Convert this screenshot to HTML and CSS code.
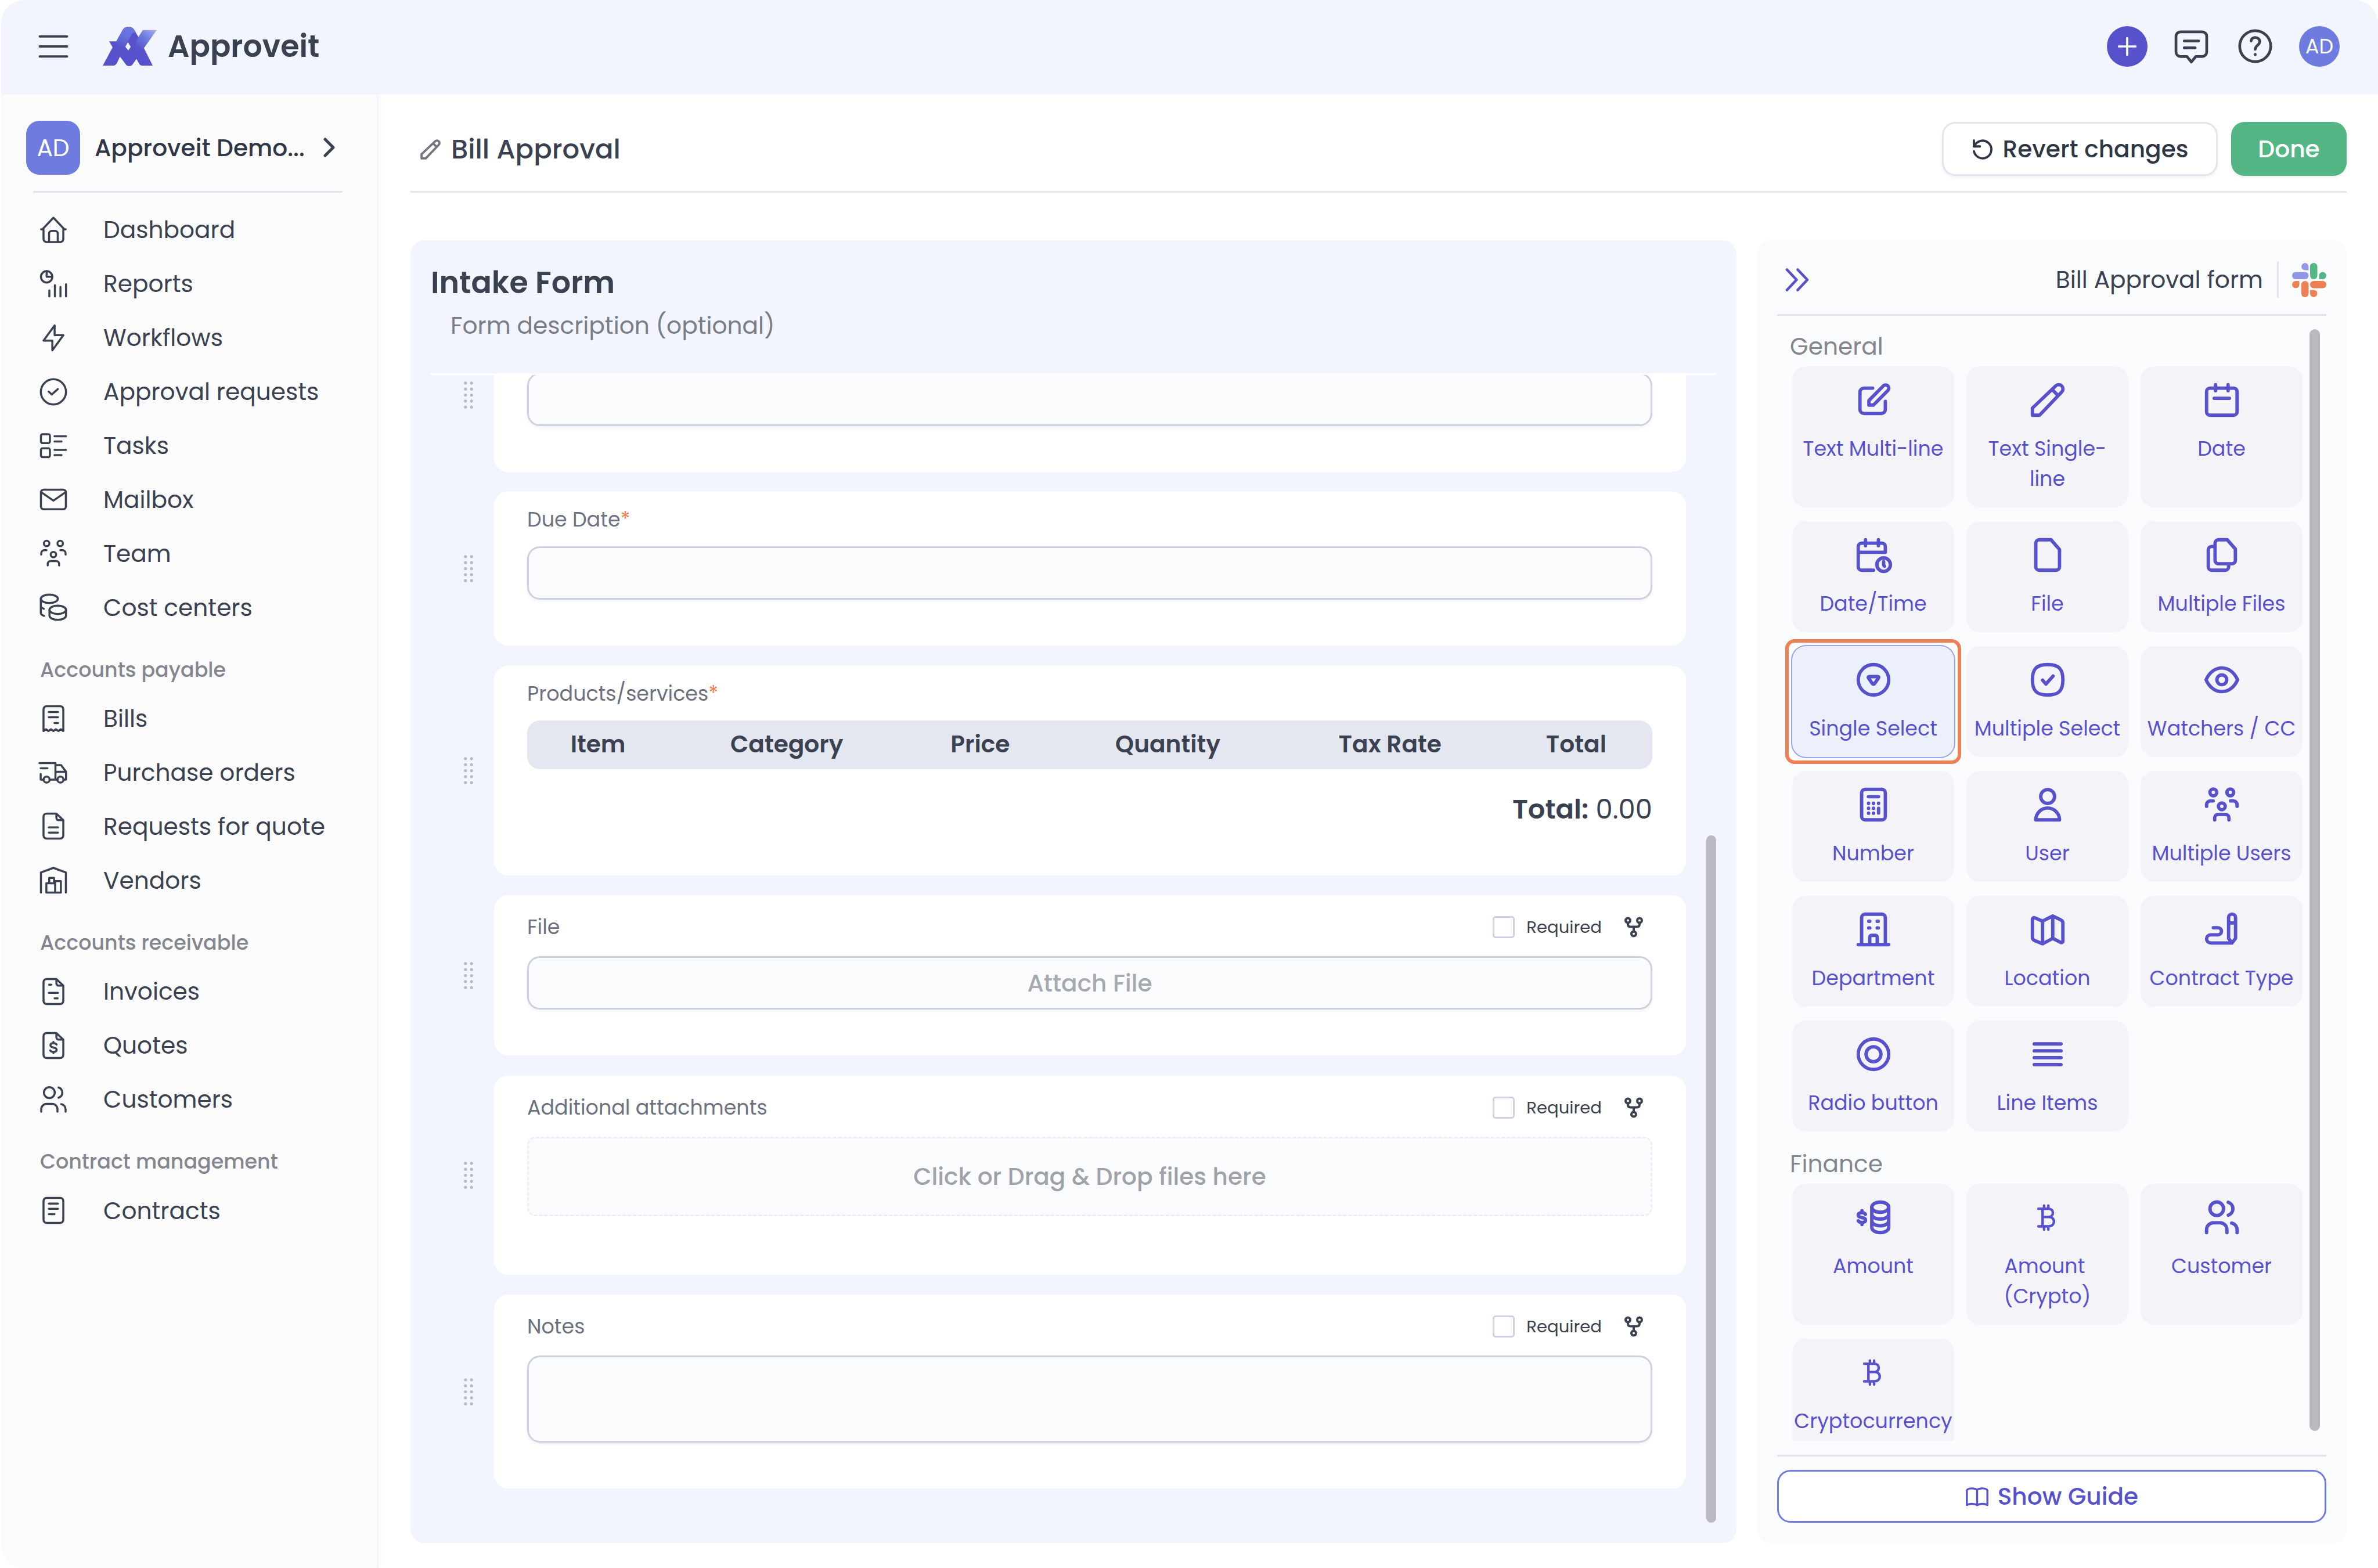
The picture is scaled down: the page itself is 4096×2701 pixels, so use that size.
FILE: index.html
```
<!DOCTYPE html>
<html lang="en">
<head>
    <meta charset="UTF-8">
    <meta name="viewport" content="width=device-width, initial-scale=1.0">
    <title>Approveit</title>
    <link rel="stylesheet" href="styles.css">
</head>
<body>

<!-- icon set -->
<svg class="sprite" xmlns="http://www.w3.org/2000/svg">
    <symbol id="i-home" viewBox="0 0 24 24"><path d="M2.9 11.6h1L12 3l8.1 8.6h1M4.7 11.6v7.2A2.3 2.3 0 0 0 7 21h10a2.3 2.3 0 0 0 2.3-2.2v-7.2M8.8 21v-6.3a2 2 0 0 1 2-2h2.4a2 2 0 0 1 2 2V21"/></symbol>
    <symbol id="i-reports" viewBox="0 0 24 24"><circle cx="7" cy="6.8" r="4.2"/><path d="M7 2.8v4h4M9 21.3v-4.5M13.1 21.3V13M17.2 21.3v-7M21.3 21.3v-9"/></symbol>
    <symbol id="i-bolt" viewBox="0 0 24 24"><path d="M12.9 2.8L4.7 14h6.5v7.2L19.4 10h-6.5z"/></symbol>
    <symbol id="i-check" viewBox="0 0 24 24"><circle cx="12" cy="12" r="9.3"/><path d="M8.5 11.8l2.3 2.1 4.5-4"/></symbol>
    <symbol id="i-tasks" viewBox="0 0 24 24"><rect x="2.8" y="3.4" width="6.6" height="6.6" rx="1.2"/><rect x="2.8" y="13.8" width="6.6" height="6.6" rx="1.2"/><path d="M12.8 4.9h8.5M12.8 8.8H18M12.8 15h8.5M12.8 18.9H18"/></symbol>
    <symbol id="i-mail" viewBox="0 0 24 24"><rect x="2.8" y="4.9" width="18.4" height="14.5" rx="2"/><path d="M3.2 6.9L12 13l8.8-6.1"/></symbol>
    <symbol id="i-team" viewBox="0 0 24 24"><circle cx="7" cy="4.8" r="2"/><circle cx="17" cy="4.8" r="2"/><circle cx="12" cy="13" r="2"/><path d="M3 13v-1a2.2 2.2 0 0 1 2.2-2.2h1.7M21 13v-1a2.2 2.2 0 0 0-2.2-2.2h-1.7M7.8 21v-1.2a2 2 0 0 1 2-2h4.4a2 2 0 0 1 2 2V21"/></symbol>
    <symbol id="i-coins" viewBox="0 0 24 24"><ellipse cx="9" cy="5.8" rx="6.3" ry="3.1"/><ellipse cx="15.2" cy="13.9" rx="6.1" ry="3.1"/><path d="M9.1 14v4.2c0 1.7 2.7 3.1 6.1 3.1s6.1-1.4 6.1-3.1V14M2.7 5.8v10.4c0 1 .9 1.7 2.4 2.2M2.7 11c0 .9.8 1.6 2.2 2.1"/></symbol>
    <symbol id="i-bill" viewBox="0 0 24 24"><path d="M4.7 21.1V5a2.2 2.2 0 0 1 2.2-2.2h10.2A2.2 2.2 0 0 1 19.3 5v16.1l-1.8-1.3-1.8 1.3-1.9-1.3-1.8 1.3-1.8-1.3-1.9 1.3-1.8-1.3zM8.6 7.1h6.8M8.6 10.9h6.8M12.8 15.2h2.6"/></symbol>
    <symbol id="i-truck" viewBox="0 0 24 24"><path d="M1.7 4.9h11.8v12.2M2.6 8.8h5M2.6 13v4.1h2.1M9.2 17.1h5.7M13.5 6.4h4.2l3.6 4.9v5.8h-1.9M13.5 11.4h7.6"/><circle cx="7" cy="17.1" r="2.2"/><circle cx="17.2" cy="17.1" r="2.2"/></symbol>
    <symbol id="i-doc" viewBox="0 0 24 24"><path d="M14.2 2.8H6.9A2.2 2.2 0 0 0 4.7 5v14a2.2 2.2 0 0 0 2.2 2.2h10.2a2.2 2.2 0 0 0 2.2-2.2V7.6zM14.2 3v3a1.6 1.6 0 0 0 1.6 1.6H19M8.6 13h6.8M8.6 16.8h6.8"/></symbol>
    <symbol id="i-warehouse" viewBox="0 0 24 24"><path d="M2.8 21.2V6.4L12 3l9.2 3.4v14.8M6.8 21.2v-6.8h6.5v6.8zM13.3 21.2v-8.4h4.2v8.4zM8.9 14.4v-4h3.6v4"/></symbol>
    <symbol id="i-invoice" viewBox="0 0 24 24"><path d="M14.2 2.8H6.9A2.2 2.2 0 0 0 4.7 5v14a2.2 2.2 0 0 0 2.2 2.2h10.2a2.2 2.2 0 0 0 2.2-2.2V7.6zM14.2 3v3a1.6 1.6 0 0 0 1.6 1.6H19M8.8 7h1.6M8.6 13h6.8M12.9 17h2.2"/></symbol>
    <symbol id="i-quote" viewBox="0 0 24 24"><path d="M14.2 2.8H6.9A2.2 2.2 0 0 0 4.7 5v14a2.2 2.2 0 0 0 2.2 2.2h10.2a2.2 2.2 0 0 0 2.2-2.2V7.6zM14.2 3v3a1.6 1.6 0 0 0 1.6 1.6H19M14.3 11.3c-.4-.7-1.2-1-2.3-1-1.3 0-2.2.6-2.2 1.6 0 2.2 4.6 1 4.6 3.2 0 1-1 1.6-2.4 1.6-1.1 0-2-.4-2.4-1.1M12 9.3v1M12 16.7v1"/></symbol>
    <symbol id="i-users" viewBox="0 0 24 24"><circle cx="9" cy="6.9" r="4"/><path d="M3 21v-1.8a4 4 0 0 1 4-4h4a4 4 0 0 1 4 4V21M15.8 3.1a4 4 0 0 1 0 7.6M17.8 15.4a4 4 0 0 1 3.2 3.9V21"/></symbol>
    <symbol id="i-contract" viewBox="0 0 24 24"><rect x="4.7" y="2.8" width="14.6" height="18.4" rx="2.2"/><path d="M8.6 7h6.8M8.6 10.8h6.8M8.6 14.8h4.2"/></symbol>
    <symbol id="i-chat" viewBox="0 0 24 24"><path d="M5.5 3.400h13a2.700 2.700 0 0 1 2.700 2.700v9.400a2.700 2.700 0 0 1-2.700 2.700h-3.800L12 21.500l-2.700-3.300H5.500a2.700 2.700 0 0 1-2.700-2.700V6.100a2.700 2.700 0 0 1 2.700-2.700zM7.700 8.900h8.600M7.700 13h6.600"/></symbol>
    <symbol id="i-help" viewBox="0 0 24 24"><circle cx="12" cy="12" r="9.3"/><path d="M9.500 8.900c.2-1.300 1.200-2.100 2.500-2.100 1.500 0 2.700 1 2.700 2.500 0 2.200-2.700 2.200-2.700 4.600M12 16.900v.2"/></symbol>
    <symbol id="i-pen" viewBox="0 0 24 24"><path d="M3 16.800L16.700 3.700a2.500 2.500 0 0 1 3.600 3.600L7.200 21H3zM14.700 5.900l3.400 3.400"/></symbol>
    <symbol id="i-revert" viewBox="0 0 24 24"><path d="M2.500 2.500V9H9M2.900 9A9.600 9.600 0 1 1 2.500 14.200"/></symbol>
    <symbol id="i-edit" viewBox="0 0 24 24"><path d="M11.500 5H6.400A2.400 2.400 0 0 0 4 7.400v10.200A2.400 2.400 0 0 0 6.400 20h10.200a2.400 2.400 0 0 0 2.400-2.400v-4.800M9.300 12.300l8.500-8.600a1.900 1.900 0 0 1 2.700 2.700L12 15H9.300z"/></symbol>
    <symbol id="i-date" viewBox="0 0 24 24"><rect x="3" y="5" width="18" height="16" rx="2"/><path d="M8.300 3v3.500M15.700 3v3.500M7.500 11h9"/></symbol>
    <symbol id="i-datetime" viewBox="0 0 24 24"><path d="M19 10.300V7a2 2 0 0 0-2-2H5a2 2 0 0 0-2 2v12a2 2 0 0 0 2 2h7M7.300 3v3.500M14.900 3v3.500M3 10.400h16M18 16v2l.5.6"/><circle cx="18" cy="17.700" r="4"/></symbol>
    <symbol id="i-file" viewBox="0 0 24 24"><path d="M5 19V5a2 2 0 0 1 2-2h7l5 5.800V19a2 2 0 0 1-2 2H7a2 2 0 0 1-2-2z"/></symbol>
    <symbol id="i-files" viewBox="0 0 24 24"><path d="M8 15.200V5a2 2 0 0 1 2-2h5.200L20 8.500v6.700a2 2 0 0 1-2 2h-8a2 2 0 0 1-2-2zM8 7H6a2 2 0 0 0-2 2v10a2 2 0 0 0 2 2h8a2 2 0 0 0 2-2v-1.800"/></symbol>
    <symbol id="i-single" viewBox="0 0 24 24"><circle cx="12" cy="12" r="9"/><path d="M9.500 10.100h5c.5 0 .8.400.5.800L12.600 14.300a.7.7 0 0 1-1.200 0L9 10.900c-.3-.4 0-.8.5-.8z"/></symbol>
    <symbol id="i-multi" viewBox="0 0 24 24"><path d="M12 3c6.500 0 9 2.500 9 9s-2.500 9-9 9-9-2.500-9-9 2.500-9 9-9z"/><path d="M9 12.200l2 2.300 4.200-4.700"/></symbol>
    <symbol id="i-eye" viewBox="0 0 24 24"><path d="M2.700 12C4.500 7.800 7.900 5 12 5s7.500 2.800 9.300 7c-1.800 4.200-5.200 7-9.300 7s-7.500-2.800-9.300-7z"/><circle cx="12" cy="12" r="2.900"/></symbol>
    <symbol id="i-calc" viewBox="0 0 24 24"><rect x="5" y="3" width="14" height="18" rx="2"/><path d="M9 7.300h6M9.100 11.200v.1M12 11.200v.1M15 11.200v.1M9.100 14.100v.1M12 14.100v.1M9.100 17v.1M12 17v.1M15 14.200V17"/></symbol>
    <symbol id="i-user" viewBox="0 0 24 24"><circle cx="12" cy="7.200" r="4.100"/><path d="M5 21a7 7 0 0 1 14 0z"/></symbol>
    <symbol id="i-building" viewBox="0 0 24 24"><path d="M5 21V5a2 2 0 0 1 2-2h10a2 2 0 0 1 2 2v16M3 21h18M9.800 21v-4.500a1 1 0 0 1 1-1h2.400a1 1 0 0 1 1 1V21M9.200 7.200h.6M14.200 7.200h.6M9.200 11.100h.6M14.200 11.100h.6"/></symbol>
    <symbol id="i-map" viewBox="0 0 24 24"><path d="M3 6.200c0-1 .7-1.400 1.500-1L9 7.100l6-3 4.800 2.300c.8.4 1.200 1 1.200 1.900v10.500c0 .9-.7 1.200-1.500.8L15 17.300l-6 3.200-4.800-2c-.8-.4-1.200-1-1.200-1.800zM9 7.100v13.400M15 4.100v13.200"/></symbol>
    <symbol id="i-sign" viewBox="0 0 24 24"><path d="M16 17.300V5a2 2 0 0 1 4.100 0v12.300L18 20zM16 8.200h4.100M18 20H5.400a2.400 2.400 0 0 1 0-4.800h4.300a2.100 2.100 0 0 0 0-4.200H7"/></symbol>
    <symbol id="i-radio" viewBox="0 0 24 24"><circle cx="12" cy="12" r="9"/><circle cx="12" cy="12" r="4.400"/></symbol>
    <symbol id="i-lines" viewBox="0 0 24 24"><path d="M4.100 5.900h15.800M4.100 10h15.800M4.100 14h15.800M4.100 18.100h15.800"/></symbol>
    <symbol id="i-amount" viewBox="0 0 24 24"><ellipse cx="16" cy="6" rx="5" ry="3"/><path d="M11 6v12c0 1.700 2.200 3 5 3s5-1.300 5-3V6M11 10c0 1.700 2.200 3 5 3s5-1.300 5-3M11 14c0 1.700 2.200 3 5 3s5-1.300 5-3M7.200 10.200c-.3-.7-1-1-2-1C4 9.200 3 9.700 3 10.600c0 2 4.300 1 4.300 3 0 .9-1 1.400-2.100 1.400-1 0-1.900-.3-2.200-1M5.200 8v1.200M5.200 15v1.200"/></symbol>
    <symbol id="i-btc" viewBox="0 0 24 24"><path d="M6.500 6.900h5.800c1.900 0 2.800 1 2.800 2.400s-.9 2.500-2.800 2.500H9M12.500 11.800c2.200 0 3.200 1.200 3.200 2.700s-1 2.800-3.200 2.800h-6M9 6.900v10.400M9.900 5v1.900M12.400 5v1.900M9.900 17.300v1.900M12.400 17.300v1.900"/></symbol>
    <symbol id="i-book" viewBox="0 0 24 20"><path d="M12 3.200C9.600 1.300 4.900 1.300 2.500 2.600c-.6.300-.9.700-.9 1.200v14.700c3-1.600 7.800-1.600 10.400.2 2.600-1.800 7.400-1.800 10.400-.2V3.800c0-.5-.3-.9-.9-1.200C19.100 1.300 14.400 1.300 12 3.200zM12 3.200v15.500"/></symbol>
    <symbol id="i-fork" viewBox="0 0 32 36"><circle cx="6" cy="6.500" r="4"/><circle cx="26" cy="6.500" r="4"/><circle cx="16" cy="29.500" r="4"/><path d="M6 10.500v2.500c0 2.800 1.700 4.500 4.500 4.500h11c2.800 0 4.500-1.700 4.500-4.500v-2.500M16 17.500v8"/></symbol>
    <symbol id="i-grip" viewBox="0 0 16 47"><g class="dots"><circle cx="2.800" cy="2.800" r="2.600"/><circle cx="13.200" cy="2.800" r="2.600"/><circle cx="2.800" cy="13.200" r="2.600"/><circle cx="13.200" cy="13.200" r="2.600"/><circle cx="2.800" cy="23.500" r="2.600"/><circle cx="13.200" cy="23.500" r="2.600"/><circle cx="2.800" cy="33.800" r="2.600"/><circle cx="13.200" cy="33.800" r="2.600"/><circle cx="2.800" cy="44.200" r="2.600"/><circle cx="13.200" cy="44.200" r="2.600"/></g></symbol>
</svg>

<header class="topbar">
    <svg class="burger" viewBox="0 0 52 40"><path d="M2.500 2.800h47M2.500 20h47M2.500 37.200h47"/></svg>
    <svg class="logo" viewBox="0 0 93 68">
        <defs>
            <linearGradient id="legGrad" gradientUnits="userSpaceOnUse" x1="44" y1="2" x2="31" y2="36">
                <stop offset="0" stop-color="#6a75dd"/><stop offset=".45" stop-color="#6571db"/><stop offset="1" stop-color="#5751cb"/>
            </linearGradient>
            <linearGradient id="armGrad" gradientUnits="userSpaceOnUse" x1="86" y1="4" x2="60" y2="38">
                <stop offset="0" stop-color="#a2a5e8"/><stop offset=".45" stop-color="#6e7ce2"/><stop offset="1" stop-color="#5751cb"/>
            </linearGradient>
        </defs>
        <path fill="#5751cb" fill-rule="evenodd" d="M0 67L17 35.400 11 25.300H23.400L34 6C36 2 39.500 0 44 0s8.500 2 10.500 6L61.500 18 71 37 86 67H68.500C65 67 63.500 65.500 62 62.500L58 55.500 52 64C50 67 48 68 45.500 68S41 67 39 64L29.600 51.500 24.500 62.500C22.500 65.500 21 67 18 67zM43.300 26.500l-4.500 8 5.200 6.500 4.200-6.300z"/>
        <path fill="url(#legGrad)" d="M23.400 25.300L34 6C36 2 39.500 0 44 0s8.500 2 10.500 6l2.500 4.500c-4-1.500-6.500 1-8.500 5L38.800 34.500 33 41 17 35.400z"/>
        <path fill="url(#armGrad)" d="M69 5.800h24L70.800 37 66 43 54 33 61.300 18z"/>
    </svg>
    <span class="brand">Approveit</span>
    <div class="top-actions">
        <div class="circle add"><svg viewBox="0 0 24 24"><path d="M12 1.800v20.400M1.800 12h20.400"/></svg></div>
        <svg class="top-icon"><use href="#i-chat"/></svg>
        <svg class="top-icon"><use href="#i-help"/></svg>
        <div class="circle user">AD</div>
    </div>
</header>

<div class="page">
    <aside class="sidebar">
        <div class="workspace">
            <div class="avatar">AD</div>
            <span class="workspace-name">Approveit Demo...</span>
            <svg class="chevron" viewBox="0 0 20 34"><path d="M3 3l14 14L3 31"/></svg>
        </div>
        <ul class="menu">
            <li><svg><use href="#i-home"/></svg>Dashboard</li>
            <li><svg><use href="#i-reports"/></svg>Reports</li>
            <li><svg><use href="#i-bolt"/></svg>Workflows</li>
            <li><svg><use href="#i-check"/></svg>Approval requests</li>
            <li><svg><use href="#i-tasks"/></svg>Tasks</li>
            <li><svg><use href="#i-mail"/></svg>Mailbox</li>
            <li><svg><use href="#i-team"/></svg>Team</li>
            <li><svg><use href="#i-coins"/></svg>Cost centers</li>
        </ul>
        <h4>Accounts payable</h4>
        <ul class="menu">
            <li><svg><use href="#i-bill"/></svg>Bills</li>
            <li><svg><use href="#i-truck"/></svg>Purchase orders</li>
            <li><svg><use href="#i-doc"/></svg>Requests for quote</li>
            <li><svg><use href="#i-warehouse"/></svg>Vendors</li>
        </ul>
        <h4>Accounts receivable</h4>
        <ul class="menu">
            <li><svg><use href="#i-invoice"/></svg>Invoices</li>
            <li><svg><use href="#i-quote"/></svg>Quotes</li>
            <li><svg><use href="#i-users"/></svg>Customers</li>
        </ul>
        <h4>Contract management</h4>
        <ul class="menu">
            <li><svg><use href="#i-contract"/></svg>Contracts</li>
        </ul>
    </aside>

    <main class="main">
        <div class="title-bar">
            <svg class="title-pen"><use href="#i-pen"/></svg>
            <h1>Bill Approval</h1>
            <button class="btn btn-revert"><svg><use href="#i-revert"/></svg>Revert changes</button>
            <button class="btn btn-done">Done</button>
        </div>

        <div class="columns">
            <!-- form preview -->
            <section class="form-panel">
                <div class="form-head">
                    <h2>Intake Form</h2>
                    <p>Form description (optional)</p>
                </div>
                <div class="form-list">
                    <div class="row">
                        <svg class="grip"><use href="#i-grip"/></svg>
                        <div class="card">
                            <div class="card-head"></div>
                            <div class="field"></div>
                        </div>
                    </div>
                    <div class="row">
                        <svg class="grip"><use href="#i-grip"/></svg>
                        <div class="card">
                            <div class="card-head"><label>Due Date<i>*</i></label></div>
                            <div class="field"></div>
                        </div>
                    </div>
                    <div class="row">
                        <svg class="grip"><use href="#i-grip"/></svg>
                        <div class="card">
                            <div class="card-head"><label>Products/services<i>*</i></label></div>
                            <div class="items-head">
                                <span>Item</span><span>Category</span><span>Price</span><span>Quantity</span><span>Tax Rate</span><span>Total</span>
                            </div>
                            <div class="items-total"><b>Total:</b> 0.00</div>
                        </div>
                    </div>
                    <div class="row">
                        <svg class="grip"><use href="#i-grip"/></svg>
                        <div class="card">
                            <div class="card-head optional">
                                <label>File</label>
                                <span class="checkbox"></span><span class="required">Required</span>
                                <svg class="fork"><use href="#i-fork"/></svg>
                            </div>
                            <div class="field">Attach File</div>
                        </div>
                    </div>
                    <div class="row">
                        <svg class="grip"><use href="#i-grip"/></svg>
                        <div class="card card-drop">
                            <div class="card-head optional">
                                <label>Additional attachments</label>
                                <span class="checkbox"></span><span class="required">Required</span>
                                <svg class="fork"><use href="#i-fork"/></svg>
                            </div>
                            <div class="dropzone">Click or Drag &amp; Drop files here</div>
                        </div>
                    </div>
                    <div class="row">
                        <svg class="grip"><use href="#i-grip"/></svg>
                        <div class="card">
                            <div class="card-head optional">
                                <label>Notes</label>
                                <span class="checkbox"></span><span class="required">Required</span>
                                <svg class="fork"><use href="#i-fork"/></svg>
                            </div>
                            <div class="field field-notes"></div>
                        </div>
                    </div>
                </div>
                <div class="scrollbar form-scroll"></div>
            </section>

            <!-- field types -->
            <section class="tools-panel">
                <div class="tools-head">
                    <svg class="collapse" viewBox="0 0 42 40"><path d="M3 2.500L19.500 20 3 37.500M21.500 2.500L38 20 21.500 37.500"/></svg>
                    <span class="tools-title">Bill Approval form</span>
                    <svg class="slack" viewBox="0 0 59 59">
                        <path fill="#9197e6" d="M28.500 12.500h-6.200A6.200 6.200 0 1 1 28.500 6.300z"/>
                        <rect fill="#9197e6" x="0" y="15.500" width="28.500" height="12.500" rx="6.200"/>
                        <rect fill="#55b685" x="31" y="0" width="12.500" height="28" rx="6.200"/>
                        <path fill="#55b685" d="M46.500 28v-6.300a6.200 6.200 0 1 1 6.200 6.300z"/>
                        <rect fill="#ee8055" x="31" y="31" width="28" height="12.500" rx="6.200"/>
                        <rect fill="#ee8055" x="16" y="31" width="12.500" height="28" rx="6.200"/>
                        <path fill="#ee8055" d="M12.500 31v6.300A6.200 6.200 0 1 1 6.300 31z"/>
                        <path fill="#ee8055" d="M31 46.500h6.300a6.200 6.200 0 1 1-6.300 6.200z"/>
                    </svg>
                </div>
                <div class="tools-list">
                    <h3>General</h3>
                    <div class="tiles">
                        <div class="tile"><svg><use href="#i-edit"/></svg>Text Multi-line</div>
                        <div class="tile"><svg><use href="#i-pen"/></svg>Text Single-<br>line</div>
                        <div class="tile"><svg><use href="#i-date"/></svg>Date</div>
                        <div class="tile"><svg><use href="#i-datetime"/></svg>Date/Time</div>
                        <div class="tile"><svg><use href="#i-file"/></svg>File</div>
                        <div class="tile"><svg><use href="#i-files"/></svg>Multiple Files</div>
                        <div class="tile active"><svg><use href="#i-single"/></svg>Single Select</div>
                        <div class="tile"><svg><use href="#i-multi"/></svg>Multiple Select</div>
                        <div class="tile"><svg><use href="#i-eye"/></svg>Watchers / CC</div>
                        <div class="tile"><svg><use href="#i-calc"/></svg>Number</div>
                        <div class="tile"><svg><use href="#i-user"/></svg>User</div>
                        <div class="tile"><svg><use href="#i-team"/></svg>Multiple Users</div>
                        <div class="tile"><svg><use href="#i-building"/></svg>Department</div>
                        <div class="tile"><svg><use href="#i-map"/></svg>Location</div>
                        <div class="tile"><svg><use href="#i-sign"/></svg>Contract Type</div>
                        <div class="tile"><svg><use href="#i-radio"/></svg>Radio button</div>
                        <div class="tile"><svg><use href="#i-lines"/></svg>Line Items</div>
                    </div>
                    <h3>Finance</h3>
                    <div class="tiles">
                        <div class="tile"><svg><use href="#i-amount"/></svg>Amount</div>
                        <div class="tile btc"><svg><use href="#i-btc"/></svg><span>Amount&nbsp;<br>(Crypto)</span></div>
                        <div class="tile"><svg><use href="#i-users"/></svg>Customer</div>
                        <div class="tile btc"><svg><use href="#i-btc"/></svg>Cryptocurrency</div>
                    </div>
                </div>
                <div class="tools-foot">
                    <button class="btn btn-guide"><svg><use href="#i-book"/></svg>Show Guide</button>
                </div>
                <div class="scrollbar tools-scroll"></div>
            </section>
        </div>
    </main>
</div>
</body>
</html>
```

FILE: styles.css
```
* {
    box-sizing: border-box;
}

html, body {
    margin: 0;
    padding: 0;
}

body {
    width: 4096px;
    height: 2701px;
    overflow: hidden;
    background-color: white;
    color: #3a4150;
    font-family: Poppins, Inter, "Open Sans", sans-serif;
    font-size: 40.7px;
}

h1, h2, h3, h4, p, ul {
    margin: 0;
    padding: 0;
}

svg {
    display: block;
    flex-shrink: 0;
    fill: none;
    stroke: currentColor;
    stroke-linecap: round;
    stroke-linejoin: round;
}

.sprite {
    position: absolute;
    width: 0;
    height: 0;
}

/* top bar */
.topbar {
    display: flex;
    align-items: center;
    height: 163px;
    margin-left: 2px;
    padding: 0 66px 4px 64px;
    background-color: #f2f4fe;
    border-radius: 40px 40px 0 0;
}

.burger {
    width: 52px;
    height: 40px;
    stroke-width: 4;
}

.logo {
    width: 93px;
    height: 68px;
    margin: 0 19px 0 59px;
    stroke: none;
}

.brand {
    font-size: 52.3px;
    font-weight: 600;
}

.top-actions {
    display: flex;
    align-items: center;
    gap: 41px;
    margin-left: auto;
}

.top-icon {
    width: 69px;
    height: 69px;
    stroke-width: 1.65;
}

.circle {
    display: flex;
    align-items: center;
    justify-content: center;
    width: 70px;
    height: 70px;
    border-radius: 50%;
    color: white;
    font-size: 34.9px;
}

.add {
    background-color: #5751cb;
}

.add svg {
    width: 34px;
    height: 34px;
    stroke-width: 2.6;
}

.user {
    background-color: #6e7ce0;
}

.page {
    display: flex;
    height: 2538px;
}

/* sidebar */
.sidebar {
    width: 649px;
    margin-left: 2px;
    padding-top: 45px;
    background-color: #fbfbfc;
    border-right: 2px solid #f3f4fa;
    border-radius: 0 0 0 40px;
    box-shadow: 3px 0 4px rgba(240, 242, 252, 0.6);
}

.workspace {
    display: flex;
    align-items: center;
    height: 124px;
    margin: 0 59px 17.5px 55px;
    padding-bottom: 29px;
    border-bottom: 3px solid #e2e4f0;
}

.avatar {
    display: flex;
    align-items: center;
    justify-content: center;
    width: 93px;
    height: 93px;
    margin-left: -12px;
    border-radius: 23px;
    background-color: #6e7ce0;
    color: white;
    font-size: 40.7px;
}

.workspace-name {
    margin-left: 25px;
    font-weight: 500;
    white-space: nowrap;
    color: #2f3746;
}

.chevron {
    width: 20px;
    height: 34px;
    margin-left: auto;
    margin-right: 13px;
    stroke-width: 5;
}

.menu {
    list-style: none;
}

.menu li {
    display: flex;
    align-items: center;
    height: 92.9px;
    padding-left: 62px;
    white-space: nowrap;
}

.menu svg {
    width: 56px;
    height: 56px;
    margin-right: 58px;
    stroke-width: 1.5;
}

.sidebar h4 {
    height: 98.6px;
    padding: 24px 0 0 67px;
    font-size: 34.9px;
    font-weight: 500;
    line-height: 74px;
    color: #83868e;
}

/* main area */
.main {
    flex: 1;
    padding: 47px 54px 0 56px;
}

.title-bar {
    display: flex;
    align-items: center;
    height: 122px;
    padding-bottom: 26px;
    border-bottom: 3px solid #e2e6ef;
}

.title-pen {
    width: 41px;
    height: 41px;
    margin: 2px 15px 0 14px;
    stroke-width: 2.2;
    color: #73767e;
}

.title-bar h1 {
    margin-right: auto;
    font-size: 46.5px;
    font-weight: 500;
}

.btn {
    display: flex;
    align-items: center;
    justify-content: center;
    height: 93px;
    border-radius: 23px;
    background-color: white;
    font: inherit;
    font-weight: 500;
    color: #2f3746;
}

.btn-revert {
    width: 475px;
    margin-right: 23px;
    border: 3px solid #e2e4ee;
    box-shadow: 0 3px 4px rgba(90, 95, 140, 0.08);
}

.btn-revert svg {
    width: 38px;
    height: 38px;
    margin-right: 16px;
    stroke-width: 2.4;
}

.btn-done {
    width: 199px;
    border: none;
    background-color: #55b685;
    color: white;
    box-shadow: 0 3px 4px rgba(90, 95, 140, 0.1);
}

.columns {
    display: flex;
    gap: 35px;
    height: 2244px;
    margin-top: 82px;
}

/* form preview */
.form-panel {
    position: relative;
    display: flex;
    flex-direction: column;
    width: 2284px;
    padding: 0 35px;
    border-radius: 24px;
    background-color: #f2f4fe;
}

.form-head {
    height: 232px;
    padding-top: 43px;
    border-bottom: 3px solid white;
}

.form-head h2 {
    font-size: 52.3px;
    font-weight: 600;
    line-height: 60px;
}

.form-head p {
    margin-top: 14px;
    padding-left: 34px;
    line-height: 60px;
    color: #7a7d85;
}

.form-list {
    display: flex;
    flex: 1;
    flex-direction: column;
    justify-content: flex-end;
    gap: 34.5px;
    min-height: 0;
    padding: 0 52px 94px 0;
    overflow: hidden;
}

.row {
    display: flex;
    flex-shrink: 0;
    align-items: center;
}

.grip {
    width: 16px;
    height: 47px;
    margin: 0 36px 0 57px;
}

.dots {
    fill: #b7b9c0;
    stroke: none;
}

.card {
    flex: 1;
    padding: 25px 58px 79px 57px;
    border-radius: 24px;
    background-color: white;
}

.card-drop {
    padding-bottom: 101px;
}

.card-head {
    display: flex;
    align-items: center;
    height: 46px;
    margin-bottom: 23px;
}

.card-head.optional {
    height: 60px;
    margin-bottom: 20px;
}

.card-head label {
    margin-right: auto;
    font-size: 34.9px;
    color: #6c7180;
}

.card-head i {
    font-style: normal;
    color: #ee8055;
}

.checkbox {
    width: 38px;
    height: 38px;
    border: 3px solid #cfd2e2;
    border-radius: 5px;
}

.required {
    margin: 0 39px 0 20px;
    font-size: 29.1px;
}

.fork {
    width: 32px;
    height: 36px;
    margin-right: 16px;
    stroke-width: 4;
}

.field {
    display: flex;
    align-items: center;
    justify-content: center;
    height: 92px;
    border: 3px solid #cdd0df;
    border-radius: 22px;
    background-color: #fafbfc;
    box-shadow: 0 3px 4px rgba(90, 95, 140, 0.08);
    font-weight: 500;
    color: #a7a9b0;
}

.field-notes {
    height: 150px;
}

.dropzone {
    display: flex;
    align-items: center;
    justify-content: center;
    height: 137px;
    border: 3px dashed #eeeff4;
    border-radius: 14px;
    background-color: #fafbfc;
    font-weight: 500;
    color: #a0a2aa;
}

.items-head {
    display: grid;
    grid-template-columns: 244fr 406fr 260fr 386fr 379fr 262fr;
    height: 84px;
    border-radius: 22px;
    background-color: #e4e7ef;
    font-weight: 600;
    line-height: 82px;
    text-align: center;
}

.items-total {
    margin-top: 34px;
    font-size: 46.5px;
    line-height: 70px;
    text-align: right;
}

.items-total b {
    font-weight: 600;
}

.scrollbar {
    position: absolute;
    border-radius: 9px;
    background-color: #b9babf;
}

.form-scroll {
    top: 1025px;
    right: 35px;
    width: 17px;
    height: 1184px;
}

/* field types panel */
.tools-panel {
    position: relative;
    z-index: 0;
    flex: 1;
    padding: 0 35px;
    border-radius: 24px;
    background-color: #fafbfd;
}

.tools-head {
    display: flex;
    align-items: center;
    height: 130px;
    padding-top: 9px;
    border-bottom: 3px solid #e3e4ee;
}

.collapse {
    width: 42px;
    height: 40px;
    margin-left: 14px;
    stroke-width: 4.6;
    color: #5751cb;
}

.tools-title {
    margin-left: auto;
    padding-right: 24px;
    border-right: 3px solid #e3e4ee;
    line-height: 62px;
    white-space: nowrap;
}

.slack {
    width: 59px;
    height: 59px;
    margin-left: 23px;
    stroke: none;
}

.tools-list {
    height: 1938px;
    padding: 23px 0 0 26px;
    overflow: hidden;
}

.tools-list h3 {
    margin: 0 0 4px -4px;
    font-size: 40.7px;
    font-weight: 400;
    line-height: 60px;
    color: #83868e;
}

.tiles {
    display: grid;
    grid-template-columns: repeat(3, 279px);
    column-gap: 21px;
    row-gap: 24px;
    margin-bottom: 26px;
}

.tile {
    position: relative;
    display: flex;
    flex-direction: column;
    align-items: center;
    padding: 23px 0;
    border-radius: 24px;
    background-color: #f3f3f8;
    font-size: 34.9px;
    line-height: 52px;
    text-align: center;
    white-space: nowrap;
    color: #5751cb;
}

.tile svg {
    width: 70px;
    height: 70px;
    margin-bottom: 23px;
    stroke-width: 2;
}

.tile.btc svg {
    stroke-width: 1.5;
}

.tile.active {
    background-color: #ecf0fa;
    box-shadow: 0 0 0 2px #9ba3ea;
}

/* highlight around the active field type */
.tile.active::before {
    content: "";
    position: absolute;
    z-index: -1;
    inset: -12px;
    border: 6px solid #ee8055;
    border-radius: 16px;
    background-color: white;
}

.tools-foot {
    margin-top: 24px;
    padding-top: 23px;
    border-top: 3px solid #e3e4ee;
}

.btn-guide {
    width: 100%;
    height: 91px;
    border: 3px solid #6e7ce0;
    color: #5751cb;
}

.btn-guide svg {
    width: 41px;
    height: 34px;
    margin-right: 15px;
    stroke-width: 2;
}

.tools-scroll {
    top: 153px;
    right: 46px;
    width: 18px;
    height: 1898px;
}
```
